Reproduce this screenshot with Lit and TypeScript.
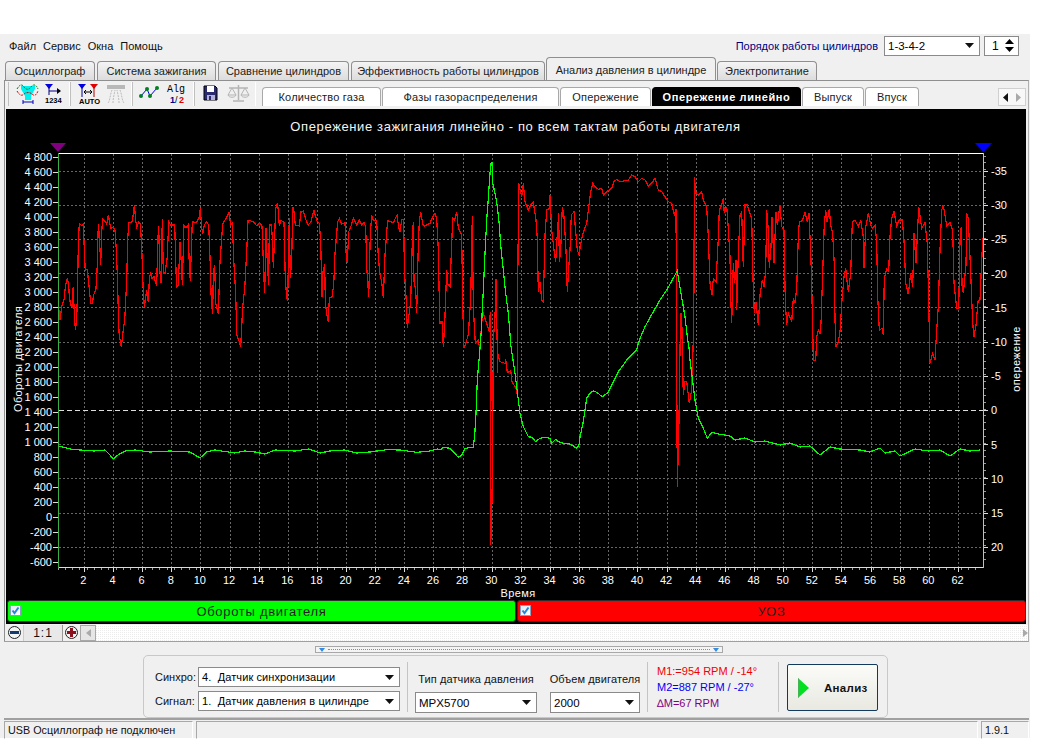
import { LitElement, html, css, svg } from 'lit'
import { customElement } from 'lit/decorators.js'

// traces were read off zoomed crops, so each chunk keeps its crop origin (scale 3)
type Chunk = [number, number, string]

const RED: Chunk[] = [
	[50, 150, '27,480 30,510 35,470 42,450 46,410 52,385 56,405 58,440 62,465 66,470 68,425 70,410 72,470 74,505 76,540 80,510 83,395 85,280 88,220 95,227 100,222 104,330 106,360 112,358 116,400 120,437 122,460 127,460 131,435 138,415 141,365 145,222 148,255 152,345 155,245 158,208 165,215 170,222 175,195 182,235 190,232 195,240 199,300 203,405 205,485 207,545 211,575 214,592 219,545 224,510 230,390 233,270 236,218 247,215 253,165 257,210 260,232 266,217 271,220 275,290 279,405 283,470 286,450 290,420 295,457 298,390 302,365 306,385 312,380 320,408 323,275 326,228 329,355 333,400 337,208 340,370 345,370 352,320 356,215 362,225 374,225 378,360 380,410 385,405 390,275 395,360 397,405 402,225 408,232 414,225 418,345 421,392 427,215 438,218 447,205 451,175 455,232 458,252 463,225 470,215 476,225 480,320 484,455 488,493 490,370 494,345 497,460 500,470 505,492 510,335 518,222 528,205 537,188 542,225 547,220 552,345 557,430 560,555 566,570 572,590 578,470 584,415 590,305 594,212 600,212'],
	[250, 150, '10,215 20,227 28,218 36,228 38,280 41,375 44,428 48,235 52,340 56,405 58,225 64,225 67,260 70,355 74,252 77,175 82,160 85,180 88,228 93,210 102,218 106,385 110,445 113,450 116,270 118,205 121,385 125,330 128,170 132,185 136,225 148,228 153,185 160,183 168,210 175,225 183,215 192,180 200,212 208,220 212,275 216,440 219,365 224,342 226,455 231,497 235,515 238,445 246,440 251,405 255,310 260,250 263,215 268,205 275,222 285,218 288,305 292,340 296,245 303,228 310,205 320,225 328,210 335,225 342,218 347,230 350,350 356,440 361,255 365,195 370,210 380,212 385,320 390,375 395,395 400,445 405,315 410,245 413,212 430,218 441,195 446,232 450,245 455,210 461,208 463,355 468,440 472,535 476,500 482,455 487,275 490,215 492,395 497,420 500,488 505,285 508,215 512,185 518,222 524,228 540,220 548,200 555,190 560,205 565,300 568,450 570,520 576,515 580,590 584,520 588,415 590,360 594,405 600,410'],
	[440, 150, '38,205 44,210 50,185 55,235 65,255 68,465 72,595 80,570 85,555 92,445 97,198 100,470 106,580 115,570 120,600 125,515 130,490 140,520 148,545 151,485 153,600'],
	[440, 340, '152,615 155,535 158,325 160,0'],
	[440, 150, '165,500 168,388 172,600'],
	[440, 340, '172,100 173,40 180,65 195,70 197,58 202,98 212,92 216,125 228,145 232,165'],
	[440, 150, '233,415 236,98 240,120 245,140 250,100 255,155 265,180 272,165 280,157 288,210 292,265 295,425 300,395 305,450 310,455 315,255 320,180 328,175 330,135 335,240 342,300 347,335 352,250 356,190 358,335 362,300 367,170 372,200 378,300 382,425 386,355 390,300 394,195 402,185 412,300 417,315 425,265 433,238 440,220 446,170 452,125 458,100 465,110 475,118 485,115 490,135 500,125 515,115 522,95 530,88 540,95 555,92 565,90 575,75 585,80 595,95 605,85 615,90 625,108 635,100 645,85 655,120 665,125 675,140 685,155 695,160 703,195 708,178 709,375'],
	[440, 340, '712,440 716,295 720,30'],
	[440, 150, '722,490 725,490 727,600'],
	[440, 340, '730,165 735,125 740,125 748,190 755,150 760,0'],
	[440, 150, '762,410 763,82 768,130 775,135 785,125 790,150 800,170 805,260 810,400 816,435 820,385 828,395 835,265'],
	[700, 150, '58,180 65,165 70,145 73,190 80,170 85,235 90,320 92,440 95,520 100,340 104,400 108,330 110,480 115,315 120,195 125,185 130,350 135,165 142,165 150,190 155,205 160,420 163,490 168,455 175,525 180,435 187,390 192,410 197,360 200,180 205,240 208,355 213,290 216,200 222,340 228,185 232,225 240,165 245,230 252,240 256,455 260,525 265,490 275,515 280,445 285,460 290,415 295,260 298,215 305,215 315,188 322,215 327,190 333,330 338,530 340,630 347,632 350,560 355,540 360,550 363,520 369,340 373,222 377,180 381,215 388,178 392,225 398,250 403,345 405,510 408,590 415,575 420,545 426,450 432,380 437,355 440,385 445,425 452,370 457,215 465,210 475,230 482,210 490,260 492,355 497,232 505,190 512,225 518,235 525,225 530,275 533,440 538,540 546,535 550,555 553,385 560,358 566,365 570,260 575,205 582,185 590,228 597,210'],
	[840, 150, '187,210 192,270 197,400 205,433 212,370 218,410 222,250 228,340 236,170 245,235 255,218 262,280 266,460 270,640 278,610 285,630 290,540 295,470 300,300 305,180 310,165 320,228 330,218 338,240 342,400 350,475 356,475 360,270 364,230 366,405 370,430 378,345 380,190 385,205 392,370 398,520 402,560 408,525 414,455 420,450 424,360 428,265 430,345'],
]

const GREEN: Chunk[] = [
	[0, 0, '174,1338 210,1347 240,1350 282,1353 315,1350 330,1365 339,1377 354,1365 375,1353 405,1350 450,1356 510,1353 570,1356 585,1365 600,1374 620,1356 645,1350 705,1359 735,1353 765,1356 795,1362 825,1350 885,1353 925,1347 960,1359 990,1353 1035,1350 1070,1359 1110,1356 1160,1349 1200,1350 1250,1357 1290,1353 1314,1347'],
	[440, 340, '0,330 10,322 30,325 40,335 55,352 65,345 75,325 100,322 104,285 108,220 112,120 118,50 122,0'],
	[440, 150, '125,515 130,420 135,310 140,210 145,145 152,40 156,38 158,100 165,130 170,155 177,215 183,295 190,360 197,430 205,490 213,590'],
	[440, 340, '225,100 235,180 240,220 250,260 265,290 275,292 287,305 300,295 315,292 330,295 335,310 347,298 355,305 370,310 385,310 400,318 410,325 417,315 420,290 428,255 435,210 440,175 450,160 460,153 470,157 487,170 505,157 520,125 535,95 550,75 560,60 578,42 590,30 598,0'],
	[440, 150, '598,570 615,530 640,485 660,450 680,420 700,385 712,362 718,400 728,460 735,500 742,560 748,600'],
	[440, 340, '750,60 758,125 765,180 775,235 790,265 802,295 815,277 840,283'],
	[0, 0, '2190,1308 2205,1320 2235,1314 2265,1326 2295,1323 2340,1335 2370,1329 2400,1341 2430,1338 2460,1365 2490,1341 2520,1347 2580,1350 2610,1356 2640,1344 2655,1359 2685,1353 2700,1368 2745,1347 2785,1353 2820,1350 2850,1368 2880,1347 2910,1353 2940,1350'],
]

const toPoints = (chunks: Chunk[]) =>
	chunks
		.flatMap(([ox, oy, s]) =>
			s.split(' ').map((p) => {
				const [x, y] = p.split(',').map(Number)
				return `${(ox + x / 3).toFixed(1)},${(oy + y / 3).toFixed(1)}`
			}),
		)
		.join(' ')

const xOf = (n: number) => 84.3 + (n - 2) * 14.57
const yOfDeg = (v: number) => 410.4 - v * 6.84

const MAIN_TABS: [string, number, boolean?][] = [
	['Осциллограф', 90],
	['Система зажигания', 119],
	['Сравнение цилиндров', 131],
	['Эффективность работы цилиндров', 194],
	['Анализ давления в цилиндре', 170, true],
	['Электропитание', 100],
]

const SUB_TABS: [string, number, boolean?][] = [
	['Количество газа', 119],
	['Фазы газораспределения', 177],
	['Опережение', 91],
	['Опережение линейно', 149, true],
	['Выпуск', 62],
	['Впуск', 54],
]

const caret = html`<svg class="caret" width="9" height="5" viewBox="0 0 9 5"><path d="M0 0h9L4.5 5z" /></svg>`

@customElement('app-root')
export class AppRoot extends LitElement {
	static styles = css`
		:host {
			display: block;
			width: 1040px;
			height: 744px;
			background: #fff;
			font: 11px 'Liberation Sans', Arial, sans-serif;
			color: #111;
			overflow: hidden;
		}
		.win {
			margin-top: 34px;
			width: 1030px;
			height: 704px;
			background: #f0f0f0;
			display: flex;
			flex-direction: column;
		}
		.top {
			height: 23px;
			display: flex;
			align-items: center;
			padding: 0 11px 0 9px;
			gap: 7px;
			flex: none;
		}
		.top .spacer {
			flex: 1;
		}
		.order {
			color: #000080;
			margin-right: -1px;
		}
		.combo {
			box-sizing: border-box;
			background: #fff;
			border: 1px solid #8a8a8a;
			display: flex;
			align-items: center;
			justify-content: space-between;
			padding: 0 5px 0 3px;
			height: 21px;
			color: #000;
			font-size: 11.5px;
		}
		.caret path {
			fill: #111;
		}
		.order-combo {
			width: 96px;
			height: 20px;
			margin-right: -3px;
		}
		.spin {
			width: 35px;
			height: 20px;
			padding: 0 4px 0 7px;
			font-size: 12px;
		}
		.arrows {
			display: flex;
			flex-direction: column;
			gap: 3px;
		}
		.tabs {
			display: flex;
			align-items: flex-end;
			height: 23px;
			padding-left: 5px;
			gap: 2px;
			flex: none;
		}
		.tab {
			box-sizing: border-box;
			height: 19px;
			border: 1px solid #8f8f8f;
			border-bottom: none;
			border-radius: 4px 4px 0 0;
			background: linear-gradient(#f4f4f4, #dcdcdc);
			display: flex;
			align-items: center;
			justify-content: center;
			white-space: nowrap;
			color: #222;
		}
		.tab.on {
			height: 23px;
			background: #f0f0f0;
			margin: 0 -1px;
			position: relative;
			z-index: 1;
			padding-top: 1px;
		}
		.panel {
			flex: none;
			margin-left: 4px;
			width: 1025px;
			border: 1px solid #8f8f8f;
			border-right: 1px solid #b0b0b0;
			border-bottom: none;
			box-sizing: border-box;
			height: 561px;
			display: flex;
			flex-direction: column;
		}
		.bar {
			height: 28px;
			display: flex;
			align-items: flex-start;
			flex: none;
			position: relative;
		}
		.tools {
			display: flex;
			height: 26px;
			align-items: center;
			padding-left: 3px;
		}
		.group {
			display: flex;
			align-items: center;
			border-left: 1px solid #c0c0c0;
			border-right: 1px solid #fff;
			height: 24px;
			box-sizing: border-box;
		}
		.group svg {
			display: block;
		}
		.sub {
			display: flex;
			align-items: flex-end;
			margin: 6px 0 0 6px;
		}
		.sub .tab {
			height: 19px;
			background: #fff;
			border-color: #a8a8a8;
			margin-right: 1px;
			letter-spacing: 0.2px;
		}
		.sub .tab.on {
			background: #000;
			color: #fff;
			font-weight: bold;
			border-color: #000;
			margin: 0 1px 0 0;
			padding: 0;
			letter-spacing: 0.6px;
			height: 19px;
		}
		.scroller {
			position: absolute;
			right: 2px;
			top: 7px;
			width: 28px;
			height: 18px;
			background: #f8f8f8;
			border: 1px solid #d0d0d0;
			box-sizing: border-box;
			display: flex;
			align-items: center;
			justify-content: space-around;
		}
		.chart {
			margin-left: 1px;
			background: #000;
			width: 1020px;
			height: 515px;
			flex: none;
			display: flex;
			flex-direction: column;
		}
		.chart > svg {
			display: block;
			flex: none;
		}
		.legend {
			display: flex;
			gap: 1px;
			height: 22px;
			padding-left: 1px;
		}
		.chan {
			position: relative;
			flex: 1;
			border-radius: 3px;
			border: 1px solid #2c2c2c;
			box-sizing: border-box;
			display: flex;
			align-items: center;
			justify-content: center;
			font-size: 13px;
			letter-spacing: 0.7px;
			color: #222;
		}
		.chan.g {
			background: #00ff00;
		}
		.chan.r {
			background: #ff0000;
		}
		.check {
			position: absolute;
			left: 2px;
			top: 4px;
			width: 11px;
			height: 11px;
			background: linear-gradient(135deg, #e2e8f2, #fff);
			border: 1px solid #8aa0c0;
			box-sizing: border-box;
			display: flex;
			align-items: center;
			justify-content: center;
		}
		.scale {
			height: 17px;
			display: flex;
			align-items: center;
			flex: none;
			margin-left: 1px;
		}
		.zoom {
			width: 13px;
			height: 13px;
			border-radius: 50%;
			border: 1px solid #222;
			background: #f4f4f4;
			box-sizing: border-box;
			display: flex;
			align-items: center;
			justify-content: center;
			margin: 0 2px;
			flex: none;
		}
		.ratio {
			width: 38px;
			height: 16px;
			background: #e8e8e8;
			border-right: 1px solid #999;
			border-left: 1px solid #ccc;
			text-align: center;
			line-height: 17px;
			font-size: 12px;
			letter-spacing: 1px;
			flex: none;
		}
		.track {
			flex: 1;
			height: 16px;
			background-color: #fff;
			background-image: linear-gradient(45deg, #ececec 25%, transparent 25%, transparent 75%, #ececec 75%);
			background-size: 2px 2px;
			display: flex;
			align-items: center;
			justify-content: space-between;
		}
		.arrow-btn {
			width: 16px;
			height: 16px;
			background: #e6e6e6;
			border: 1px solid #a8a8a8;
			box-sizing: border-box;
			display: flex;
			align-items: center;
			justify-content: center;
			flex: none;
		}
		.lower {
			flex: none;
			margin-left: 4px;
			width: 1025px;
			height: 79px;
			border-top: 1px solid #a0a0a0;
			border-bottom: 2px solid #a0a0a0;
			box-sizing: border-box;
			display: flex;
			flex-direction: column;
			align-items: center;
		}
		.grip {
			box-sizing: border-box;
			width: 408px;
			height: 7px;
			margin: 4px 0 2px 5px;
			border: 1px solid #a8a8a8;
			background: #f4f4f4;
			display: flex;
			align-items: center;
			justify-content: space-between;
			padding: 0 3px;
			flex: none;
		}
		.grip i {
			flex: 1;
			height: 0;
			margin: 0 3px;
			border-top: 1px dotted #4a9ae8;
		}
		.grip b {
			border: 3px solid transparent;
			border-top: 4px solid #2f8be6;
			border-bottom: none;
		}
		.box {
			box-sizing: border-box;
			width: 745px;
			height: 63px;
			margin-left: -2px;
			border: 1px solid #c8c8c8;
			border-radius: 5px;
			display: flex;
			align-items: stretch;
			padding: 5px 6px 4px 11px;
		}
		.sync {
			display: grid;
			grid-template-columns: 43px 202px;
			row-gap: 4px;
			align-items: center;
			align-content: start;
			padding-top: 6px;
			margin-right: 7px;
		}
		.sync .combo {
			height: 20px;
			font-size: 11px;
			letter-spacing: 0.1px;
		}
		.sep {
			width: 1px;
			background: #c4c4c4;
			flex: none;
			margin: 1px 0;
		}
		.field {
			display: flex;
			flex-direction: column;
			align-items: center;
			justify-content: flex-end;
			gap: 7px;
			letter-spacing: 0.1px;
		}
		.field .combo {
			letter-spacing: 0;
		}
		.type {
			width: 136px;
		}
		.type .combo {
			width: 122px;
		}
		.volume {
			width: 102px;
		}
		.volume .combo {
			width: 90px;
		}
		.sep.after {
			margin-left: 1px;
		}
		.m {
			padding: 1px 0 0 9px;
			width: 130px;
			box-sizing: border-box;
			display: flex;
			flex-direction: column;
			justify-content: center;
			gap: 3px;
			line-height: 13px;
		}
		.m1 {
			color: #f00000;
		}
		.m2 {
			color: #0000f0;
		}
		.dm {
			color: #800080;
		}
		.run {
			box-sizing: border-box;
			width: 91px;
			height: 47px;
			margin: 3px 0 0 8px;
			border: 1px solid #123a5c;
			border-radius: 2px;
			background: linear-gradient(#fbfbf8, #e9e9e2);
			display: flex;
			align-items: center;
			padding-left: 10px;
			gap: 15px;
			font-weight: bold;
			font-size: 11.5px;
			letter-spacing: 0.3px;
		}
		.status {
			flex: 1;
			display: flex;
			gap: 3px;
			padding: 1px 0 0 4px;
			font-size: 10.8px;
		}
		.status div {
			box-sizing: border-box;
			border-left: 1px solid #a8a8a8;
			border-top: 1px solid #a8a8a8;
			border-right: 1px solid #fff;
			border-bottom: 1px solid #fff;
			line-height: 16px;
			padding: 0 3px;
			white-space: nowrap;
		}
		.s1 {
			width: 189px;
		}
		.s2 {
			width: 782px;
		}
		.s3 {
			width: 48px;
		}
	`

	private renderChart() {
		const evens = Array.from({ length: 31 }, (_, i) => 2 + i * 2)
		const degrees = [35, 30, 25, 20, 15, 10, 5, 0, -5, -10, -15, -20]
		const rpm = Array.from({ length: 28 }, (_, i) => 4800 - i * 200)
		const minorX = Array.from({ length: 127 }, (_, i) => 58 + i * 7.285)
		const minorY = Array.from({ length: 60 }, (_, i) => 156 + i * 6.84)
		return html`<svg width="1020" height="491" viewBox="6 109 1020 491">
			<g font-family="'Liberation Sans', Arial, sans-serif" font-size="11" fill="#fff">
				<text x="515.500" y="131" text-anchor="middle" font-size="13" letter-spacing="0.62" fill="#f4f4f4"
					>Опережение зажигания линейно - по всем тактам работы двигателя</text
				>
				${evens.map(
					(n) => svg`<line x1=${xOf(n)} x2=${xOf(n)} y1="154" y2="567" stroke="#666" stroke-dasharray="2 2" shape-rendering="crispEdges" />
					<line x1=${xOf(n)} x2=${xOf(n)} y1="567" y2="572" stroke="#ddd" shape-rendering="crispEdges" />
					<text x=${xOf(n) - 1} y="584" text-anchor="middle">${n}</text>`,
				)}
				${degrees.map(
					(d) => svg`<line x1="59" x2="983" y1=${yOfDeg(d)} y2=${yOfDeg(d)} stroke=${d === 0 ? '#ddd' : '#666'} stroke-dasharray=${d === 0 ? '5 3' : '2 2'} shape-rendering="crispEdges" />
					<line x1="983" x2="988" y1=${yOfDeg(d)} y2=${yOfDeg(d)} stroke="#ddd" shape-rendering="crispEdges" />
					<text x="991" y=${yOfDeg(d) + 4}>${d > 0 ? '-' : ''}${Math.abs(d)}</text>`,
				)}
				${rpm.map(
					(v, i) => svg`<line x1="53" x2="58" y1=${157 + i * 15} y2=${157 + i * 15} stroke="#ddd" shape-rendering="crispEdges" />
					<text x="52" y=${161 + i * 15} text-anchor="end">${v
						.toString()
						.replace(/(\d)(\d{3})$/, '$1 $2')}</text>`,
				)}
				${minorX.map(
					(x) => svg`<line x1=${x} x2=${x} y1="567" y2="570" stroke="#999" shape-rendering="crispEdges" />`,
				)}
				${minorY.map(
					(y) => svg`<line x1="983" x2="986" y1=${y} y2=${y} stroke="#999" shape-rendering="crispEdges" />`,
				)}
				<polyline points=${toPoints(RED)} fill="none" stroke="#ff0000" stroke-width="1.2" shape-rendering="crispEdges" />
				<polyline points=${toPoints(GREEN)} fill="none" stroke="#00ff00" stroke-width="1.2" shape-rendering="crispEdges" />
				<line x1="58" x2="983" y1="153.5" y2="153.5" stroke="#fff" />
				<line x1="58" x2="983" y1="567.5" y2="567.5" stroke="#ddd" />
				<line x1="58.5" x2="58.5" y1="153" y2="568" stroke="#3cb043" />
				<line x1="983.5" x2="983.5" y1="153" y2="568" stroke="#c8c878" />
				<path d="M50 143h16l-8 9z" fill="#800080" />
				<path d="M975 143h17l-8.500 9z" fill="#0000ff" />
				<text x="518" y="597" text-anchor="middle" letter-spacing="0.4">Время</text>
				<text transform="translate(22 359) rotate(-90)" text-anchor="middle" letter-spacing="0.35">Обороты двигателя</text>
				<text transform="translate(1020 359) rotate(-90)" text-anchor="middle" letter-spacing="0.35">опережение</text>
			</g>
		</svg>`
	}

	private renderTools() {
		const gray = '#b4b4b4'
		return html`<div class="tools">
			<div class="group">
				<svg width="60" height="22" viewBox="0 0 60 22">
					<path d="M12 3h14v3l-4 7v4h-6v-4l-4-7z" fill="#00f0f0" />
					<path d="M8 6c3-5 5-5 7-2s5 3 7 0 5-3 7 2" fill="none" stroke="#008000" stroke-dasharray="2 1" />
					<path d="M8 8c3 5 5 5 7 3s6-2 8 0 4 2 6-3" fill="none" stroke="#e00000" stroke-dasharray="2 1" />
					<path d="M14 19h10M14 17v4M24 17v4" stroke="#0000c0" fill="none" />
					<path d="M36 1h8l-4 5z" fill="#0000e0" />
					<path d="M40 4v8M40 8h10" stroke="#000080" fill="none" />
					<path d="M48 5l4 3-4 3z" fill="#000" />
					<text x="36" y="20" font-size="7.500" font-weight="bold" font-family="'Liberation Sans'">1234</text>
				</svg>
			</div>
			<div class="group">
				<svg width="60" height="22" viewBox="0 0 60 22">
					<path d="M7 1h8l-4 5z" fill="#0000e0" /><path d="M11 4v10" stroke="#0000a0" />
					<path d="M19 1h8l-4 5z" fill="#e00000" /><path d="M23 4v10" stroke="#b00000" />
					<path d="M13 9h8M15 7l-2 2 2 2M19 7l2 2-2 2" stroke="#000" fill="none" />
					<text x="8" y="21" font-size="7.500" font-weight="bold" font-family="'Liberation Sans'">AUTO</text>
					<path d="M36 2h18v4H36z" fill="#b8b8b8" />
					<path d="M37 20c2-2 2-8 4-13M42 20c0-4 1-8 2-13M48 20c0-4-1-8-2-13M53 20c-2-2-2-8-4-13" fill="none" stroke="#bbb" stroke-dasharray="2 1" />
				</svg>
			</div>
			<div class="group">
				<svg width="60" height="22" viewBox="0 0 60 22">
					<path d="M8 13l6-7 3 7 7-8" fill="none" stroke="#0000e0" />
					<circle cx="8" cy="13" r="2" fill="#008020" /><circle cx="14" cy="6" r="2" fill="#008020" />
					<circle cx="17" cy="13" r="2" fill="#008020" /><circle cx="24" cy="5" r="2" fill="#008020" />
					<text x="34" y="9" font-size="10" font-family="'Liberation Mono'">Alg</text>
					<text x="37" y="20" font-size="9" font-weight="bold" font-family="'Liberation Sans'" fill="#000090">1</text>
					<text x="42" y="20" font-size="9" font-family="'Liberation Sans'">/</text>
					<text x="46" y="20" font-size="9" font-weight="bold" font-family="'Liberation Sans'" fill="#e00000">2</text>
				</svg>
			</div>
			<div class="group">
				<svg width="60" height="22" viewBox="0 0 60 22">
					<path d="M9 3h11l2 2v12H9z" fill="#2a2a70" stroke="#000" />
					<path d="M12 3h7v6h-7z" fill="#fff" />
					<path d="M12 12h8v5h-8z" fill="#b0b0d8" />
					<path d="M14 13h2v4h-2z" fill="#2a2a70" />
					<path d="M34 5h19M43.500 2v15M38 18h11" fill="none" stroke=${gray} stroke-width="1.500" />
					<path d="M37 5l-4 7h8zM50 5l-4 7h8zM33 12c1 3 7 3 8 0M46 12c1 3 7 3 8 0" fill="none" stroke=${gray} />
				</svg>
			</div>
		</div>`
	}

	render() {
		return html`<div class="win">
			<div class="top">
				<span>Файл</span><span>Сервис</span><span>Окна</span><span>Помощь</span>
				<span class="spacer"></span>
				<span class="order">Порядок работы цилиндров</span>
				<div class="combo order-combo"><span>1-3-4-2</span>${caret}</div>
				<div class="combo spin">
					<span>1</span>
					<span class="arrows">
						<svg width="9" height="5" viewBox="0 0 9 5"><path d="M0 5h9L4.500 0z" /></svg>
						<svg width="9" height="5" viewBox="0 0 9 5"><path d="M0 0h9L4.500 5z" /></svg>
					</span>
				</div>
			</div>
			<div class="tabs">
				${MAIN_TABS.map(
					([t, w, on]) => html`<div class="tab ${on ? 'on' : ''}" style="width:${w}px">${t}</div>`,
				)}
			</div>
			<div class="panel">
				<div class="bar">
					${this.renderTools()}
					<div class="sub">
						${SUB_TABS.map(
							([t, w, on]) => html`<div class="tab ${on ? 'on' : ''}" style="width:${w}px">${t}</div>`,
						)}
					</div>
					<div class="scroller">
						<svg width="5" height="9" viewBox="0 0 5 9"><path d="M5 0v9L0 4.500z" fill="#111" /></svg>
						<svg width="5" height="9" viewBox="0 0 5 9"><path d="M0 0v9l5-4.500z" fill="#aaa" /></svg>
					</div>
				</div>
				<div class="chart">
					${this.renderChart()}
					<div class="legend">
						<div class="chan g">
							<span class="check"><svg width="9" height="9" viewBox="0 0 9 9"><path d="M1.500 4.500l2 2.500 4-5.500" fill="none" stroke="#1e88e5" stroke-width="2" /></svg></span>
							Обороты двигателя
						</div>
						<div class="chan r">
							<span class="check"><svg width="9" height="9" viewBox="0 0 9 9"><path d="M1.500 4.500l2 2.500 4-5.500" fill="none" stroke="#1e88e5" stroke-width="2" /></svg></span>
							УОЗ
						</div>
					</div>
				</div>
				<div class="scale">
					<span class="zoom"><svg width="9" height="3" viewBox="0 0 9 3"><path d="M0 0h9v3H0z" fill="#123a6c" /></svg></span>
					<span class="ratio">1:1</span>
					<span class="zoom"><svg width="9" height="9" viewBox="0 0 9 9"><path d="M3 0h3v3h3v3H6v3H3V6H0V3h3z" fill="#8b1020" /></svg></span>
					<div class="track">
						<span class="arrow-btn"><svg width="5" height="8" viewBox="0 0 5 8"><path d="M5 0v8L0 4z" fill="#aaa" /></svg></span>
						<svg width="5" height="8" viewBox="0 0 5 8"><path d="M0 0v8l5-4z" fill="#aaa" /></svg>
					</div>
				</div>
			</div>
			<div class="lower">
				<div class="grip"><b></b><i></i><b></b></div>
				<div class="box">
					<div class="sync">
						<span>Синхро:</span>
						<div class="combo"><span>4.&nbsp; Датчик синхронизации</span>${caret}</div>
						<span>Сигнал:</span>
						<div class="combo"><span>1.&nbsp; Датчик давления в цилиндре</span>${caret}</div>
					</div>
					<div class="sep"></div>
					<div class="field type">
						<span>Тип датчика давления</span>
						<div class="combo"><span>MPX5700</span>${caret}</div>
					</div>
					<div class="field volume">
						<span>Объем двигателя</span>
						<div class="combo"><span>2000</span>${caret}</div>
					</div>
					<div class="sep after"></div>
					<div class="m">
						<span class="m1">M1:=954 RPM / -14°</span>
						<span class="m2">M2=887 RPM / -27°</span>
						<span class="dm">∆M=67 RPM</span>
					</div>
					<div class="sep"></div>
					<div class="run">
						<svg width="11" height="20" viewBox="0 0 11 20"><path d="M0 0l11 10L0 20z" fill="#00e020" /><path d="M0 0v20" stroke="#888" /></svg>
						<span>Анализ</span>
					</div>
				</div>
			</div>
			<div class="status">
				<div class="s1">USB Осциллограф не подключен</div>
				<div class="s2"></div>
				<div class="s3">1.9.1</div>
			</div>
		</div>`
	}
}
